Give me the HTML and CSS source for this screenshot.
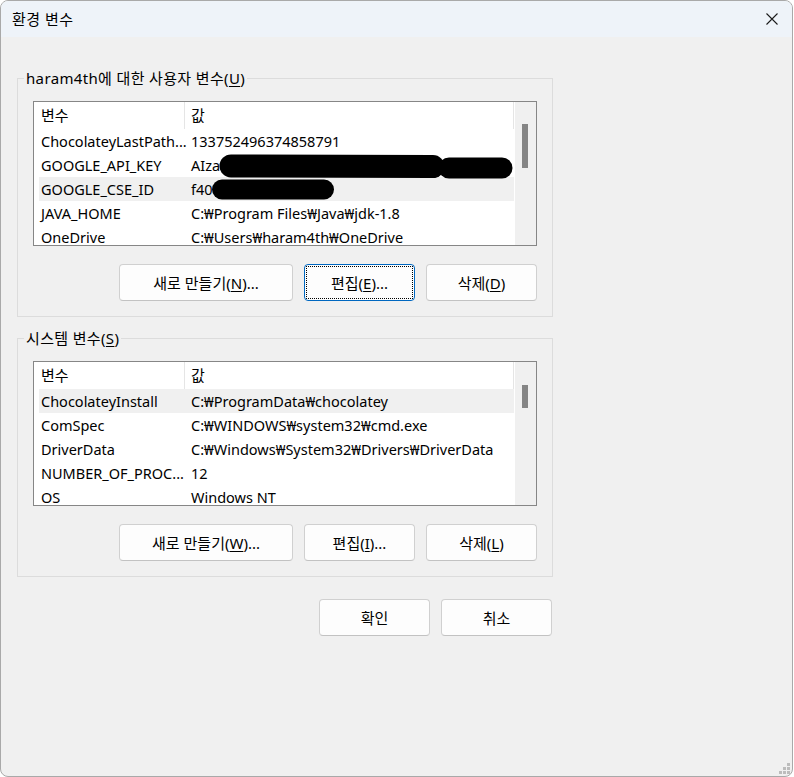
FILE: index.html
```html
<!DOCTYPE html>
<html lang="ko">
<head>
<meta charset="utf-8">
<title>환경 변수</title>
<link rel="stylesheet" href="styles.css">
</head>
<body>
<div class="window">
  <div class="titlebar">
    <span class="title">환경 변수</span>
    <svg class="close" width="12" height="12" viewBox="0 0 12 12"><path d="M0.5 0.5 L11.5 11.5 M11.5 0.5 L0.5 11.5" stroke="#1b1b1b" stroke-width="1.1" fill="none"/></svg>
  </div>
  <div class="content">
    <fieldset class="group">
      <legend>haram4th에 대한 사용자 변수(<u>U</u>)</legend>
      <div class="group-body">
        <div class="list">
          <div class="list-main">
            <div class="head"><div class="c1">변수</div><div class="c2">값</div></div>
            <div class="row"><div class="c1">ChocolateyLastPath...</div><div class="c2">133752496374858791</div></div>
            <div class="row"><div class="c1">GOOGLE_API_KEY</div><div class="c2"><span>AIza</span><svg class="redact r1" width="294" height="25" viewBox="0 0 294 25"><path d="M12 12 L214 12.5" stroke="#000" stroke-width="23" stroke-linecap="round" fill="none"/><path d="M230 14 L283 14" stroke="#000" stroke-width="21" stroke-linecap="round" fill="none"/></svg></div></div>
            <div class="row sel"><div class="c1">GOOGLE_CSE_ID</div><div class="c2"><span>f40</span><svg class="redact r2" width="122" height="21" viewBox="0 0 122 21"><path d="M10 10.5 L112 10.5" stroke="#000" stroke-width="20" stroke-linecap="round" fill="none"/></svg></div></div>
            <div class="row"><div class="c1">JAVA_HOME</div><div class="c2">C:₩Program Files₩Java₩jdk-1.8</div></div>
            <div class="row"><div class="c1">OneDrive</div><div class="c2">C:₩Users₩haram4th₩OneDrive</div></div>
          </div>
          <div class="scroll"><div class="thumb t1"></div></div>
        </div>
        <div class="btns">
          <button class="btn wide">새로 만들기(<u>N</u>)...</button>
          <button class="btn focus">편집(<u>E</u>)...</button>
          <button class="btn">삭제(<u>D</u>)</button>
        </div>
      </div>
    </fieldset>
    <fieldset class="group">
      <legend>시스템 변수(<u>S</u>)</legend>
      <div class="group-body">
        <div class="list">
          <div class="list-main">
            <div class="head"><div class="c1">변수</div><div class="c2">값</div></div>
            <div class="row sel"><div class="c1">ChocolateyInstall</div><div class="c2">C:₩ProgramData₩chocolatey</div></div>
            <div class="row"><div class="c1">ComSpec</div><div class="c2">C:₩WINDOWS₩system32₩cmd.exe</div></div>
            <div class="row"><div class="c1">DriverData</div><div class="c2">C:₩Windows₩System32₩Drivers₩DriverData</div></div>
            <div class="row"><div class="c1">NUMBER_OF_PROC...</div><div class="c2">12</div></div>
            <div class="row"><div class="c1">OS</div><div class="c2">Windows NT</div></div>
          </div>
          <div class="scroll"><div class="thumb t2"></div></div>
        </div>
        <div class="btns">
          <button class="btn wide">새로 만들기(<u>W</u>)...</button>
          <button class="btn">편집(<u>I</u>)...</button>
          <button class="btn">삭제(<u>L</u>)</button>
        </div>
      </div>
    </fieldset>
    <div class="footer">
      <button class="btn">확인</button>
      <button class="btn">취소</button>
    </div>
  </div>
  <svg class="grip" width="11" height="11" viewBox="0 0 11 11">
    <rect x="8" y="0" width="3" height="3" fill="#bcbcbc"/>
    <rect x="4" y="4" width="3" height="3" fill="#bcbcbc"/>
    <rect x="8" y="4" width="3" height="3" fill="#bcbcbc"/>
    <rect x="0" y="8" width="3" height="3" fill="#bcbcbc"/>
    <rect x="4" y="8" width="3" height="3" fill="#bcbcbc"/>
    <rect x="8" y="8" width="3" height="3" fill="#bcbcbc"/>
  </svg>
</div>
</body>
</html>
```
FILE: styles.css
```css
html, body {
  margin: 0;
  padding: 0;
  background: #ffffff;
}
body {
  font-family: "Noto Sans", "Noto Sans CJK KR", sans-serif;
  font-size: 15px;
  color: #000;
}
.window {
  width: 793px;
  height: 777px;
  box-sizing: border-box;
  border: 1px solid #a9a9a9;
  border-radius: 8px;
  background: #f0f0f0;
  overflow: hidden;
  position: relative;
}
.titlebar {
  height: 36px;
  background: #eef3f9;
  display: flex;
  align-items: center;
  justify-content: space-between;
  padding: 0 14px 0 11px;
}
.title {
  line-height: 20px;
  letter-spacing: 0.5px;
}
.close {
  display: block;
}
.content {
  padding: 31px 0 0 16px;
}
.group {
  width: 536px;
  box-sizing: border-box;
  margin: 0;
  padding: 0;
  border: 1px solid #dcdcdc;
  min-inline-size: auto;
}
.group + .group {
  margin-top: 11px;
}
.group legend {
  margin-left: 6px;
  padding: 0 2px;
  line-height: 21px;
  letter-spacing: 0.35px;
}
.group-body {
  padding: 12px 15px 15px;
}
.list {
  width: 504px;
  height: 145px;
  box-sizing: border-box;
  border: 1px solid #868686;
  background: #fff;
  display: flex;
  font-size: 14.5px;
}
.list-main {
  width: 481px;
  overflow: hidden;
}
.head {
  display: flex;
  height: 27px;
  line-height: 27px;
  font-size: 15px;
}
.head .c1 {
  width: 151px;
  box-sizing: border-box;
  padding-left: 7px;
  border-right: 1px solid #e5e5e5;
}
.head .c2 {
  width: 329px;
  box-sizing: border-box;
  padding-left: 6px;
  border-right: 1px solid #e5e5e5;
}
.row {
  display: flex;
  height: 24px;
  line-height: 24px;
  width: 475px;
  margin-left: 5px;
}
.row.sel {
  background: #f0f0f0;
}
.row .c1 {
  width: 146px;
  box-sizing: border-box;
  padding-left: 2px;
  white-space: nowrap;
}
.row .c2 {
  flex: 1;
  padding-left: 6px;
  white-space: nowrap;
  display: flex;
  align-items: center;
}
.redact {
  flex-shrink: 0;
  display: block;
}
.redact.r1 {
  margin-top: 2px;
  margin-left: -1px;
}
.redact.r2 {
  margin-top: 1px;
  margin-left: -1px;
}
.scroll {
  width: 21px;
  background: #f0f0f0;
}
.thumb {
  width: 6px;
  margin-left: 7px;
  background: #858585;
}
.thumb.t1 {
  margin-top: 22px;
  height: 44px;
}
.thumb.t2 {
  margin-top: 23px;
  height: 23px;
}
.btns {
  display: flex;
  justify-content: flex-end;
  gap: 11px;
  margin-top: 18px;
}
.btn {
  width: 111px;
  height: 37px;
  box-sizing: border-box;
  border: 1px solid #d0d0d0;
  border-bottom-color: #c2c2c2;
  border-radius: 4px;
  background: #fdfdfd;
  font: inherit;
  color: #000;
  padding: 0;
  position: relative;
  line-height: 20px;
}
.btn.wide {
  width: 174px;
}
.btn.focus {
  border-color: #0067c0;
}
.btn.focus::after {
  content: "";
  position: absolute;
  inset: 1px;
  border: 1px dotted #000;
}
.btn u, legend u {
  text-underline-offset: 2px;
}
.footer {
  width: 535px;
  display: flex;
  justify-content: flex-end;
  gap: 11px;
  margin-top: 22px;
}
.grip {
  position: absolute;
  right: 2px;
  bottom: 2px;
}
```
